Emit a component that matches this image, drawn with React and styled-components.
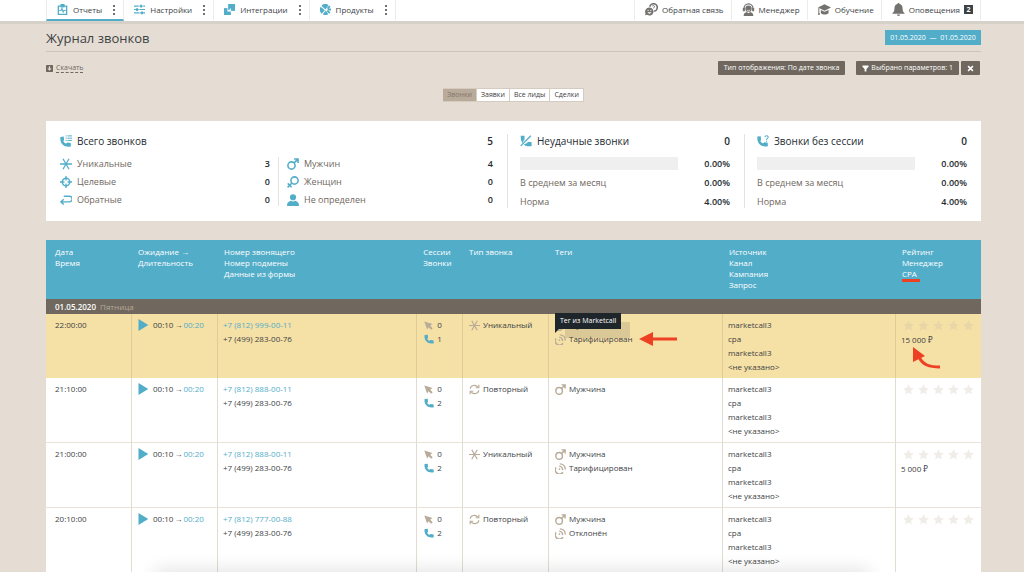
import { Fragment, useState } from 'react';
import styled, { createGlobalStyle } from 'styled-components';

const GlobalStyle = createGlobalStyle`
     * {
          box-sizing: border-box;
     }

     html {
          scrollbar-width: none;
     }

     body {
          margin: 0;
          background-color: #e5ddd3;
          color: #3d4245;
          font-family: 'Open Sans', 'Noto Sans', sans-serif;
          font-size: 8px;
          line-height: 14px;
     }

     button {
          font: inherit;
          color: inherit;
          border: none;
          background: none;
          padding: 0;
          cursor: pointer;
     }

     a {
          color: inherit;
          text-decoration: none;
     }

     svg {
          display: block;
          flex-shrink: 0;
     }
`;

const BLUE = '#52adc9';
const BROWN = '#70685e';
const SAND = '#b9ab9a';

const ICONS = {
     reports: (
          <>
               <path d="M2 3h12v12H2z" fill="none" stroke="currentColor" strokeWidth="2" />
               <path d="M5 0h6v5H5z" fill="currentColor" />
               <path d="M3.5 9.5H6l1.3-3 1.7 5 1.2-2h2.3" fill="none" stroke="currentColor" strokeWidth="1.5" />
          </>
     ),
     settings: (
          <>
               <path d="M0 3h16M0 8h16M0 13h16" stroke="currentColor" strokeWidth="1.8" />
               <path d="M9 1h3v4H9zM3 6h3v4H3zM10 11h3v4h-3z" fill="currentColor" />
               <path d="M7.5 1v4M13 1v4M7.5 6v4M8.5 11v4" stroke="#fff" strokeWidth="1" />
          </>
     ),
     integrations: (
          <>
               <path d="M0 6h10v10H0z" fill="currentColor" />
               <path d="M5 0h11v11H5z" fill="#fff" />
               <path d="M6 0h10v10H6z" fill="currentColor" />
               <path d="M8.5 6.5H10V10H6V8.5h2.5z" fill="#fff" />
          </>
     ),
     products: (
          <>
               <path d="M2 2.5 8 8 12.5 1.5A8 8 0 0 0 2 2.5zM1 4a8 8 0 0 0 1.5 10L7 9zM8.5 9.5 4 15a8 8 0 0 0 8 0z" fill="currentColor" />
               <path d="M14.5 3 11 6.5M16 8h-5M14.5 13l-4-3" stroke="currentColor" strokeWidth="2.6" fill="none" />
          </>
     ),
     feedback: (
          <>
               <circle cx="10.5" cy="5.5" r="4.6" fill="none" stroke="currentColor" strokeWidth="2" />
               <path d="M9 3.8c1-1.3 3-.6 2.7.8-.2.9-1.2 1-1.2 2" stroke="currentColor" strokeWidth="1.2" fill="none" />
               <circle cx="5.5" cy="10.5" r="5.9" fill="#fff" />
               <path d="M5.5 5.5a5 5 0 1 1-3 9L.3 15l.2-2.6a5 5 0 0 1 5-6.900z" fill="currentColor" />
               <path d="M3 11.5c1 2.2 4 2.2 5 0z" fill="#fff" />
               <circle cx="3.8" cy="9" r=".8" fill="#fff" />
               <circle cx="7.2" cy="9" r=".8" fill="#fff" />
          </>
     ),
     manager: (
          <>
               <path d="M2.5 9V6.5a5.5 5.5 0 0 1 11 0V9" fill="none" stroke="currentColor" strokeWidth="1.6" />
               <path d="M1 6h2.5v4H1zM12.5 6H15v4h-2.5z" fill="currentColor" />
               <circle cx="8" cy="7" r="3.9" fill="currentColor" />
               <path d="M2 16c0-3.5 2-4.5 4-5l2 1.5L10 11c2 .5 4 1.500 4 5z" fill="currentColor" />
               <path d="M6 8.5c1 1.3 3 1.3 4 0" stroke="#fff" fill="none" strokeWidth=".9" />
          </>
     ),
     education: (
          <>
               <path d="M8 1.5 16 5.5 8 9.5 0 5.5z" fill="currentColor" />
               <path d="M3.5 8.5 8 10.8l5-2.3v4c-2.5 2-7 2-9.5 0z" fill="currentColor" />
               <path d="M1 6v7" stroke="currentColor" strokeWidth="1.2" />
               <circle cx="1.2" cy="13.5" r="1.2" fill="currentColor" />
          </>
     ),
     bell: (
          <path
               d="M8 0c.8 0 1.3.6 1.3 1.3C11.8 2 13 4 13 6.5c0 3.5.8 4.8 2.5 6v.8H.5v-.8c1.7-1.2 2.5-2.5 2.500-6C3 4 4.2 2 6.7 1.3 6.7.6 7.2 0 8 0zM6 14.2h4a2 1.8 0 0 1-4 0z"
               fill="currentColor"
          />
     ),
     download: (
          <>
               <rect width="16" height="16" rx="1.5" fill="currentColor" />
               <path d="M6.5 3h3v5H13l-5 5-5-5h3.500z" fill="#e5ddd3" />
          </>
     ),
     filter: <path d="M1 1h14v3l-5 5v6H6V9L1 4z" fill="currentColor" />,
     close: <path d="m2.5 2.5 11 11M13.5 2.5l-11 11" stroke="currentColor" strokeWidth="3.6" />,
     phone: (
          <path
               d="M1 1.5 6 1l.4 5.2L5.2 7.5c.6 1.8 1.9 3 3.8 3.4l1.5-1.3 4.9.6.2 4.6C7 16.8-.6 11.5 1 1.5z"
               fill="currentColor"
          />
     ),
     phoneList: (
          <>
               <path d="M.5 2.5 5 2l.4 4.8L4.5 8c.6 1.8 2 3 3.8 3.4l1.4-1.3 4.6.6.2 4.5C6 16.8-.6 12 .5 2.5z" fill="currentColor" />
               <path d="M7.5 1.2H9M10 1.2h6M7.5 4.2H9M10 4.2h6M7.5 7.2H9M10 7.2h6" stroke="currentColor" strokeWidth="1.3" />
          </>
     ),
     phoneOff: (
          <>
               <path d="M1 1h5v5.5l-1.500 1L4 11C1.5 9 .8 6 1 1zM15.5 14.5c-4 1-8 .5-10.5-2l4.5-2 1-1.500 5 .5z" fill="currentColor" />
               <path d="M14.5 1 1 14.5" stroke="currentColor" strokeWidth="1.8" />
          </>
     ),
     phoneAsk: (
          <>
               <path d="M.5 2 5 1.500l.4 5L4.500 7.700c.6 1.800 2 3 3.800 3.400l1.400-1.300 4.600.6.2 4.500C6 16.500-.6 11.700.5 2z" fill="currentColor" />
               <path d="M10.5 2.8c.3-2.6 4.7-2.5 4.4.2-.2 1.5-2.2 1.6-2.2 3.5" stroke="currentColor" strokeWidth="1.4" fill="none" />
               <path d="M12 7.700h1.500v1.400H12z" fill="currentColor" />
          </>
     ),
     unique: (
          <path
               d="M0 8h16M4 1l8 14M12 1 4 15"
               stroke="currentColor"
               strokeWidth="1.7"
               fill="none"
          />
     ),
     target: (
          <>
               <circle cx="8" cy="8" r="5" fill="none" stroke="currentColor" strokeWidth="1.9" />
               <path d="M8 0v6M8 10v6M0 8h6M10 8h6" stroke="currentColor" strokeWidth="1.7" />
          </>
     ),
     back: (
          <path
               d="M5 3h7.5a2.8 2.8 0 0 1 0 7.5H1.5M5 7l-3.7 3.5L5 14"
               fill="none"
               stroke="currentColor"
               strokeWidth="1.9"
          />
     ),
     male: (
          <>
               <circle cx="6" cy="10" r="4.8" fill="none" stroke="currentColor" strokeWidth="2.1" />
               <path d="m9.5 6.5 5-5M9.5 1.3h5.2v5.2" fill="none" stroke="currentColor" strokeWidth="2.1" />
          </>
     ),
     female: (
          <>
               <circle cx="10" cy="6" r="4.8" fill="none" stroke="currentColor" strokeWidth="2.1" />
               <path d="M6.5 9.5.8 15.2M1 9.8l5.2 5.2" stroke="currentColor" strokeWidth="2" />
          </>
     ),
     person: (
          <>
               <circle cx="8" cy="4.3" r="4.1" fill="currentColor" />
               <path d="M0 16c0-4.5 1.8-6 5-7 1.5 1.3 4.5 1.3 6 0 3.2 1 5 2.5 5 7z" fill="currentColor" />
          </>
     ),
     cursor: <path d="M.5 1 15 5.5 11 8.3l4.5 4.5-2.8 2.7-4.5-4.5L5.5 15z" fill="currentColor" />,
     repeat: (
          <>
               <path d="M1.8 7c.4-5 7.5-7 11-2.5M14.2 9c-.4 5-7.5 7-11 2.5" fill="none" stroke="currentColor" strokeWidth="1.7" />
               <path d="M14.3 1v4.5H9.8M1.7 15v-4.5h4.5" fill="none" stroke="currentColor" strokeWidth="1.7" />
          </>
     ),
     signal: (
          <>
               <path d="M1.5 6.5A6 6 0 0 0 11.500 13.500" fill="none" stroke="currentColor" strokeWidth="2.300" />
               <path d="M6 4.500a5.200 5.200 0 0 1 5 6" fill="none" stroke="currentColor" strokeWidth="2" />
               <path d="M7 1.200c5 0 8 4 8 8.300" fill="none" stroke="currentColor" strokeWidth="2" />
               <circle cx="6.500" cy="8.800" r="1.300" fill="currentColor" />
          </>
     ),
     play: <path d="M2 0v16l13-8z" fill="currentColor" />,
     star: (
          <path
               d="m8 .5 2.300 5 5.500.6-4.100 3.700 1.200 5.500L8 12.500l-4.900 2.800 1.200-5.500L.2 6.100l5.500-.6z"
               fill="currentColor"
          />
     ),
};

const Icon = ({ name, size = 12 }) => (
     <svg width={size} height={size} viewBox="0 0 16 16" aria-hidden="true">
          {ICONS[name]}
     </svg>
);

const Header = styled.header`
     display: flex;
     justify-content: space-between;
     height: 24px;
     padding: 0 43px 0 46px;
     background-color: #fff;
     border-bottom: 3px solid #d6d1c8;
`;

const Nav = styled.nav`
     display: flex;
`;

const NavItem = styled.div`
     display: flex;
     align-items: center;
     gap: 10px;
     padding: 0 7px 0 10px;
     border-right: 1px solid #ececec;
     border-bottom: 2px solid ${({ $active }) => ($active ? BLUE : 'transparent')};
     font-weight: 500;

     &:first-child {
          border-left: 1px solid #ececec;
     }
`;

const NavLink = styled.a`
     display: flex;
     align-items: center;
     gap: ${({ $muted }) => ($muted ? 4 : 5)}px;
     color: #3d4245;

     svg {
          color: ${({ $muted }) => ($muted ? '#74726f' : BLUE)};
     }
`;

const MenuButton = styled.button`
     display: flex;
     flex-direction: column;
     gap: 2px;
     width: 4px;
     align-items: center;

     i {
          width: 2px;
          height: 2px;
          background-color: #74726f;
     }
`;

const Count = styled.span`
     background-color: #3d4245;
     color: #fff;
     width: 9px;
     font-size: 7px;
     line-height: 9px;
     text-align: center;
     font-weight: 700;
`;

const Page = styled.main`
     padding: 0 43px 0 46px;
`;

const TitleRow = styled.div`
     display: flex;
     align-items: center;
     justify-content: space-between;
     height: 28px;
     border-bottom: 1px solid #cec5ba;

     h1 {
          margin: 0;
          font-size: 13px;
          font-weight: 500;
     }
`;

const DateButton = styled.button`
     background-color: ${BLUE};
     color: #fff;
     width: 96px;
     font-size: 7px;
     line-height: 15px;
     white-space: pre;
`;

const Toolbar = styled.div`
     display: flex;
     align-items: center;
     padding: 9px 1px 0 0;
     font-size: 7px;
`;

const Download = styled.a`
     display: flex;
     align-items: center;
     gap: 3px;
     margin-right: auto;
     color: ${BROWN};
     line-height: 8px;

     span {
          border-bottom: 1px dashed ${BROWN};
     }
`;

const DarkButton = styled.button`
     display: flex;
     align-items: center;
     justify-content: center;
     gap: 2px;
     height: 14px;
     padding: 0 6px;
     margin-left: ${({ $gap }) => $gap}px;
     background-color: ${BROWN};
     color: #fff;
     border-radius: 1px;
`;

const Tabs = styled.div`
     display: flex;
     justify-content: center;
     margin-top: 13px;
`;

const Tab = styled.button`
     height: 14px;
     padding: 0 4px;
     font-size: 7px;
     line-height: 12px;
     border: 1px solid #d5cbc0;
     border-left-width: 0;
     background-color: ${({ $active }) => ($active ? SAND : '#fff')};
     color: ${({ $active }) => ($active ? '#837769' : '#3d4245')};
`;

const Stats = styled.section`
     display: grid;
     grid-template-columns: 461fr 237fr 237fr;
     margin-top: 19px;
     padding: 13px 0;
     background-color: #fff;
`;

const Card = styled.div`
     padding: 0 14px;

     & + & {
          padding-left: 12px;
          border-left: 1px solid #e6e2dc;
     }
`;

const CardTitle = styled.h2`
     display: flex;
     align-items: center;
     gap: 5px;
     height: 14px;
     margin: 0 0 9px;
     font-size: 10px;
     font-weight: 500;
     color: #252b30;

     b {
          margin-left: auto;
          font-weight: 600;
     }
`;

const Columns = styled.div`
     display: grid;
     grid-template-columns: 218fr 215fr;
`;

const List = styled.div`
     display: grid;
     gap: ${({ $gap }) => $gap}px;
     align-content: start;

     & + & {
          border-left: 1px solid #e6e2dc;
          padding-left: 8px;
     }
`;

const StatRow = styled.div`
     display: flex;
     align-items: center;
     gap: 4px;
     height: 13px;
     padding-right: ${({ $inset }) => ($inset ? 8 : 0)}px;
     font-size: 9px;
     color: ${BROWN};

     svg {
          color: ${BLUE};
     }

     b {
          margin-left: auto;
          font-weight: 600;
          color: #252b30;
     }
`;

const Bar = styled.div`
     width: 75%;
     height: 13px;
     background-color: #efefef;
`;

const Table = styled.table`
     width: 100%;
     margin-top: 19px;
     table-layout: fixed;
     border-collapse: separate;
     border-spacing: 0;
     background-color: #fff;

     thead th {
          height: 59px;
          padding: 6px 6px 0;
          vertical-align: top;
          text-align: left;
          font-weight: 500;
          line-height: 11px;
          color: #fff;
          background-color: ${BLUE};
     }

     thead th:first-child {
          padding-left: 9px;
     }
`;

const DayRow = styled.tr`
     th {
          height: 15px;
          padding: 0 9px;
          text-align: left;
          font-weight: 600;
          line-height: 15px;
          color: #fff;
          background-color: ${BROWN};
     }

     span {
          margin-left: 2px;
          font-weight: 400;
          color: #b5a999;
     }
`;

const CallRow = styled.tr`
     background-color: ${({ $marked }) => ($marked ? '#f5e0a5' : '#fff')};

     td {
          padding: 4px 0 4px 5px;
          height: 64px;
          vertical-align: top;
          border-bottom: ${({ $marked }) => ($marked ? 0 : 1)}px solid #e9e2d6;
          border-right: 1px solid ${({ $marked }) => ($marked ? '#dfcc98' : '#e2dbd2')};
     }

     td:first-child {
          padding-left: 9px;
     }

     td:last-child {
          border-right: none;
     }
`;

const Line = styled.div`
     position: relative;
     isolation: isolate;
     display: flex;
     align-items: center;
     gap: 3px;
     height: 14px;
     padding-left: ${({ $inset = 0 }) => $inset}px;
     white-space: nowrap;
`;

const Tint = styled.span`
     color: ${({ $color }) => $color};
     width: ${({ $width }) => $width}px;
     flex-shrink: 0;
`;

const PlayButton = styled.button`
     color: ${BLUE};
     width: 13px;
`;

const Arrow = styled.span`
     padding: 0 1px;
`;

const BlueLink = styled.a`
     color: ${BLUE};
`;

const Stars = styled.div`
     display: flex;
     gap: 4px;
     height: 15px;
     padding: 2px 0 0 2px;
     color: rgba(200, 190, 175, 0.28);
`;

const Ghost = styled.span`
     position: absolute;
     z-index: -1;
     left: 11px;
     bottom: 8px;
     width: 65px;
     height: 16px;
     background-color: rgba(112, 104, 94, 0.2);
`;

const Tooltip = styled.span`
     position: absolute;
     left: 1px;
     bottom: 17px;
     padding: 0 5px;
     font-size: 7px;
     font-weight: 500;
     line-height: 16px;
     color: #fff;
     background-color: #1f262b;

     &::after {
          content: '';
          position: absolute;
          left: 0;
          top: 100%;
          border-top: 4px solid #1f262b;
          border-right: 4px solid transparent;
     }
`;

const ArrowLeft = styled.svg`
     position: absolute;
     left: 85px;
     top: 0;
`;

const ArrowCurve = styled.svg`
     position: absolute;
     left: 11px;
     top: 14px;
`;

const Marked = styled.span`
     display: inline-block;
     border-bottom: 3px solid #ee4023;
     padding-right: 3px;
`;

const DockShade = styled.div`
     position: fixed;
     left: 15%;
     right: 15%;
     bottom: -8px;
     height: 8px;
     box-shadow: 0 0 18px rgba(0, 0, 0, 0.2);
`;

const menu = [
     { icon: 'reports', label: 'Отчеты', active: true },
     { icon: 'settings', label: 'Настройки' },
     { icon: 'integrations', label: 'Интеграции' },
     { icon: 'products', label: 'Продукты' },
];

const serviceMenu = [
     { icon: 'feedback', label: 'Обратная связь' },
     { icon: 'manager', label: 'Менеджер' },
     { icon: 'education', label: 'Обучение' },
     { icon: 'bell', label: 'Оповещения', count: 2 },
];

const tabs = ['Звонки', 'Заявки', 'Все лиды', 'Сделки'];

const callKinds = [
     ['unique', 'Уникальные', 3],
     ['target', 'Целевые', 0],
     ['back', 'Обратные', 0],
];

const callers = [
     ['male', 'Мужчин', 4],
     ['female', 'Женщин', 0],
     ['person', 'Не определен', 0],
];

const rateCards = [
     ['phoneOff', 'Неудачные звонки'],
     ['phoneAsk', 'Звонки без сессии'],
];

const columns = [
     { width: '9.2%', lines: ['Дата', 'Время'] },
     { width: '9.2%', lines: ['Ожидание →', 'Длительность'] },
     { width: '21.3%', lines: ['Номер звонящего', 'Номер подмены', 'Данные из формы'] },
     { width: '4.9%', lines: ['Сессии', 'Звонки'] },
     { width: '9.2%', lines: ['Тип звонка'] },
     { width: '18.6%', lines: ['Теги'] },
     { width: '18.5%', lines: ['Источник', 'Канал', 'Кампания', 'Запрос'] },
     { width: '9.1%', lines: ['Рейтинг', 'Менеджер', 'CPA'] },
];

const calls = [
     { time: '22:00:00', phone: '+7 (812) 999-00-11', count: 1, unique: true, status: 'Тарифицирован', cpa: '15 000 ₽', marked: true },
     { time: '21:10:00', phone: '+7 (812) 888-00-11', count: 2 },
     { time: '21:00:00', phone: '+7 (812) 888-00-11', count: 2, unique: true, status: 'Тарифицирован', cpa: '5 000 ₽' },
     { time: '20:10:00', phone: '+7 (812) 777-00-88', count: 2, status: 'Отклонён' },
];

const source = ['marketcall3', 'cpa', 'marketcall3', '<не указано>'];

const Call = ({ call }) => (
     <CallRow $marked={call.marked}>
          <td>{call.time}</td>
          <td>
               <Line>
                    <PlayButton aria-label="Прослушать">
                         <Icon name="play" size={12} />
                    </PlayButton>
                    <span>
                         00:10
                         <Arrow>→</Arrow>
                         <BlueLink href="#duration">00:20</BlueLink>
                    </span>
               </Line>
          </td>
          <td>
               <Line>
                    <BlueLink href="#caller">{call.phone}</BlueLink>
               </Line>
               <Line>+7 (499) 283-00-76</Line>
          </td>
          <td>
               <Line $inset={2}>
                    <Tint $color={SAND} $width={10}>
                         <Icon name="cursor" size={9} />
                    </Tint>
                    0
               </Line>
               <Line $inset={2}>
                    <Tint $color={BLUE} $width={10}>
                         <Icon name="phone" size={10} />
                    </Tint>
                    {call.count}
               </Line>
          </td>
          <td>
               <Line $inset={1}>
                    <Tint $color={SAND} $width={11}>
                         <Icon name={call.unique ? 'unique' : 'repeat'} size={11} />
                    </Tint>
                    {call.unique ? 'Уникальный' : 'Повторный'}
               </Line>
          </td>
          <td>
               <Line $inset={1}>
                    <Tint $color={SAND} $width={11}>
                         <Icon name="male" size={11} />
                    </Tint>
                    Мужчина
               </Line>
               {call.status && (
                    <Line $inset={1}>
                         {call.marked && <Ghost />}
                         <Tint $color={SAND} $width={11}>
                              <Icon name="signal" size={11} />
                         </Tint>
                         {call.status}
                         {call.marked && (
                              <>
                                   <Tooltip role="tooltip">Тег из Marketcall</Tooltip>
                                   <ArrowLeft width="38" height="14" viewBox="0 0 38 14">
                                        <path d="M12 7h26" stroke="#ee4023" strokeWidth="3" />
                                        <path d="M0 7 14 0v14z" fill="#ee4023" />
                                   </ArrowLeft>
                              </>
                         )}
                    </Line>
               )}
          </td>
          <td>
               {source.map((item, index) => (
                    <Line key={index}>{item}</Line>
               ))}
          </td>
          <td>
               <Stars role="img" aria-label="Нет оценки">
                    {[1, 2, 3, 4, 5].map((star) => (
                         <Icon key={star} name="star" size={11} />
                    ))}
               </Stars>
               {call.cpa && (
                    <Line>
                         {call.cpa}
                         {call.marked && (
                              <ArrowCurve width="30" height="23" viewBox="0 0 30 23">
                                   <path d="M7 10c4 8 10 10 21 10" fill="none" stroke="#ee4023" strokeWidth="3" />
                                   <path d="M1 0v15l12-6z" fill="#ee4023" />
                              </ArrowCurve>
                         )}
                    </Line>
               )}
          </td>
     </CallRow>
);

const App = () => {
     const [activeTab, setActiveTab] = useState('Звонки');

     return (
          <>
               <GlobalStyle />
               <Header>
                    <Nav>
                         {menu.map(({ icon, label, active }) => (
                              <NavItem key={label} $active={active}>
                                   <NavLink href={`#${icon}`}>
                                        <Icon name={icon} size={11} />
                                        {label}
                                   </NavLink>
                                   <MenuButton aria-label={`Меню: ${label}`}>
                                        <i />
                                        <i />
                                        <i />
                                   </MenuButton>
                              </NavItem>
                         ))}
                    </Nav>
                    <Nav>
                         {serviceMenu.map(({ icon, label, count }) => (
                              <NavItem key={label}>
                                   <NavLink href={`#${icon}`} $muted>
                                        <Icon name={icon} size={13} />
                                        {label}
                                        {count && <Count>{count}</Count>}
                                   </NavLink>
                              </NavItem>
                         ))}
                    </Nav>
               </Header>
               <Page>
                    <TitleRow>
                         <h1>Журнал звонков</h1>
                         <DateButton>{'01.05.2020  —  01.05.2020'}</DateButton>
                    </TitleRow>
                    <Toolbar>
                         <Download href="#download">
                              <Icon name="download" size={7} />
                              <span>Скачать</span>
                         </Download>
                         <DarkButton>Тип отображения: По дате звонка</DarkButton>
                         <DarkButton $gap={11}>
                              <Icon name="filter" size={7} />
                              Выбрано параметров: 1
                         </DarkButton>
                         <DarkButton $gap={2} aria-label="Сбросить">
                              <Icon name="close" size={7} />
                         </DarkButton>
                    </Toolbar>
                    <Tabs>
                         {tabs.map((tab) => (
                              <Tab
                                   key={tab}
                                   $active={tab === activeTab}
                                   onClick={() => setActiveTab(tab)}
                              >
                                   {tab}
                              </Tab>
                         ))}
                    </Tabs>
                    <Stats>
                         <Card>
                              <CardTitle>
                                   <Tint $color={BLUE} $width={12}>
                                        <Icon name="phoneList" />
                                   </Tint>
                                   Всего звонков <b>5</b>
                              </CardTitle>
                              <Columns>
                                   {[callKinds, callers].map((rows, index) => (
                                        <List key={index} $gap={5}>
                                             {rows.map(([icon, label, value]) => (
                                                  <StatRow key={label} $inset={index === 0}>
                                                       <Tint $width={13}>
                                                            <Icon name={icon} size={12} />
                                                       </Tint>
                                                       {label} <b>{value}</b>
                                                  </StatRow>
                                             ))}
                                        </List>
                                   ))}
                              </Columns>
                         </Card>
                         {rateCards.map(([icon, label]) => (
                              <Card key={label}>
                                   <CardTitle>
                                        <Tint $color={BLUE} $width={12}>
                                             <Icon name={icon} />
                                        </Tint>
                                        {label} <b>0</b>
                                   </CardTitle>
                                   <List $gap={6}>
                                        <StatRow>
                                             <Bar /> <b>0.00%</b>
                                        </StatRow>
                                        <StatRow>
                                             В среднем за месяц <b>0.00%</b>
                                        </StatRow>
                                        <StatRow>
                                             Норма <b>4.00%</b>
                                        </StatRow>
                                   </List>
                              </Card>
                         ))}
                    </Stats>
                    <Table>
                         <colgroup>
                              {columns.map(({ width, lines }) => (
                                   <col key={lines[0]} width={width} />
                              ))}
                         </colgroup>
                         <thead>
                              <tr>
                                   {columns.map(({ lines }) => (
                                        <th key={lines[0]} scope="col">
                                             {lines.map((line) => (
                                                  <Fragment key={line}>
                                                       {line === 'CPA' ? <Marked>{line}</Marked> : line}
                                                       <br />
                                                  </Fragment>
                                             ))}
                                        </th>
                                   ))}
                              </tr>
                         </thead>
                         <tbody>
                              <DayRow>
                                   <th colSpan={8}>
                                        01.05.2020 <span>Пятница</span>
                                   </th>
                              </DayRow>
                              {calls.map((call) => (
                                   <Call key={call.time} call={call} />
                              ))}
                         </tbody>
                    </Table>
               </Page>
               <DockShade />
          </>
     );
};

export default App;
